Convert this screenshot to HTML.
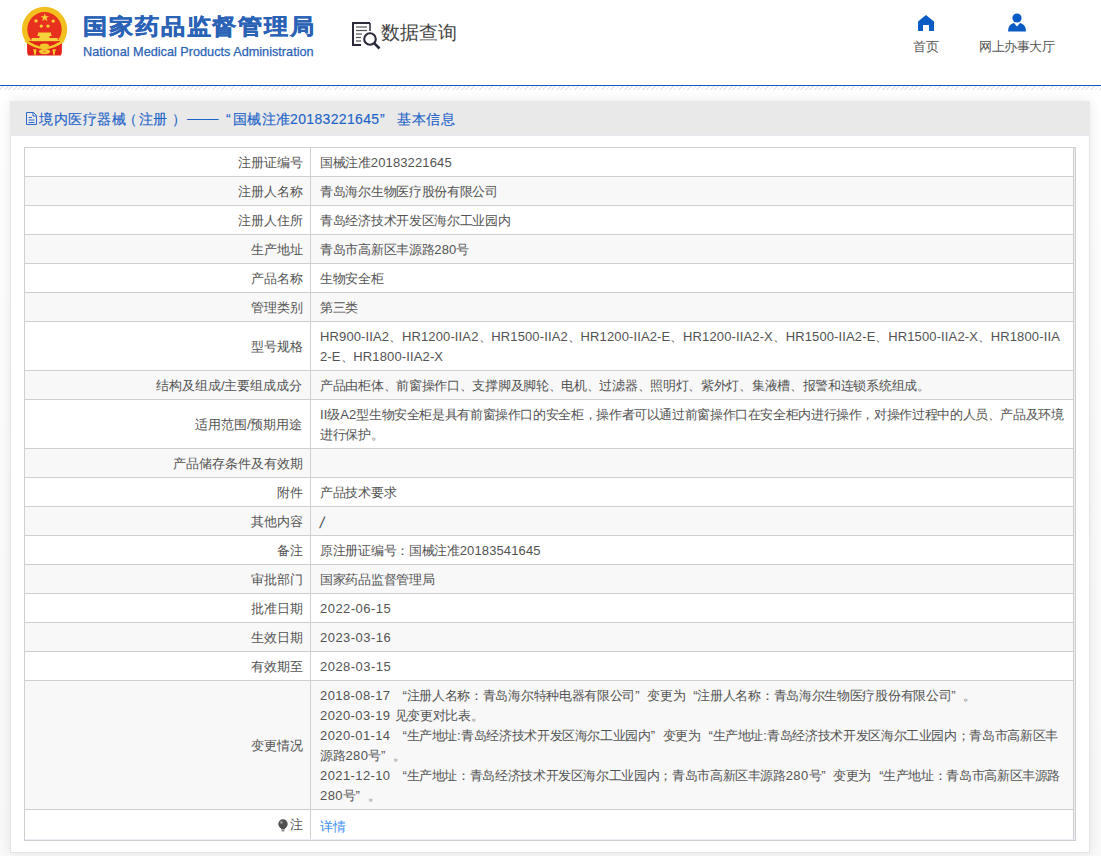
<!DOCTYPE html>
<html><head><meta charset="utf-8">
<style>
html,body{margin:0;padding:0;}
body{width:1101px;height:856px;overflow:hidden;position:relative;background:#fff;font-family:"Liberation Sans",sans-serif;color:#333;}
.abs{position:absolute;}
#bline{position:absolute;left:0;top:85px;width:1101px;height:1px;background:#0a5cc4;}
#hatch{position:absolute;left:0;top:86px;width:1101px;height:4px;
 background:repeating-linear-gradient(135deg,#fff 0px,#fff 2px,#e8e8e8 2px,#e8e8e8 3.2px);}
#bg{position:absolute;left:0;top:90px;width:1101px;height:766px;background:linear-gradient(#fff,#f9f9f9);}
.t1{position:absolute;left:83px;top:13px;font-size:24.7px;letter-spacing:0.9px;font-weight:bold;color:#2a62b6;white-space:nowrap;line-height:30px;transform:scaleY(0.91);transform-origin:0 0;-webkit-text-stroke:0.4px #2a62b6;}
.t2{position:absolute;left:83px;top:45px;font-size:12.7px;color:#2a62b6;white-space:nowrap;line-height:14px;-webkit-text-stroke:0.25px #2a62b6;}
.sq{position:absolute;left:381px;top:19px;font-size:19.2px;color:#444;white-space:nowrap;line-height:28px;}
.nav{position:absolute;font-size:13px;color:#555;white-space:nowrap;line-height:16px;}
#panel{position:absolute;left:10px;top:101px;width:1078px;height:751px;background:#fff;border:1px solid #e4e4e4;border-top:none;
 box-shadow:0 0 12px rgba(0,0,0,0.09);}
#ph{position:absolute;left:10px;top:101px;width:1080px;height:34px;background:#e9e9e9;border-bottom:1px solid #e9ebf3;}
.ptitle{position:absolute;left:39px;top:109px;font-size:14px;color:#1e64c8;white-space:nowrap;line-height:20px;-webkit-text-stroke:0.15px #1e64c8;}
.ptitle .q1{margin-left:9px;} .ptitle .q2{margin-right:9px;}
#tbl{position:absolute;left:24px;top:147px;width:1050px;height:692px;border:1px solid #d1ced0;background:#eceef5;font-size:13px;color:#535353;}
.row{display:flex;width:1049px;border-top:1px solid #d1ced0;background:#fff;}
.row.first{border-top:none;}
.row.g{background:#f8f8f8;}
.l{width:277.5px;padding-right:7.5px;text-align:right;white-space:nowrap;display:flex;align-items:center;justify-content:flex-end;line-height:20px;padding-top:1px;box-sizing:content-box;}
.r{width:753px;padding-left:9px;letter-spacing:-0.3px;border-left:1px solid #d1ced0;border-right:1px solid #d1ced0;white-space:nowrap;line-height:20px;display:flex;flex-direction:column;justify-content:center;padding-top:1px;}
.r .q1{margin-left:8px;} .r .q2{margin-right:8px;} .r .a{letter-spacing:0.13px;}
.bulb{display:inline-block;width:10px;height:13px;margin-right:2px;vertical-align:-2px;}
a{color:#3d8ff0;text-decoration:none;position:relative;top:2px;}
</style></head>
<body>
<!-- emblem -->
<svg class="abs" style="left:15px;top:3px" width="60" height="60" viewBox="0 0 60 60">
 <circle cx="29.6" cy="26.4" r="22.6" fill="#f2c01e"/>
 <circle cx="29.5" cy="26.3" r="17.2" fill="#e8301f"/>
 <path d="M12,38 L47,38 L46.8,49.5 L46,52.6 L13,52.6 L12.2,49.5 Z" fill="#e2231a"/>
 <path d="M10,37.2 Q29.5,52.5 49,37.2" fill="none" stroke="#f3c72a" stroke-width="2.6"/>
 <ellipse cx="29.5" cy="42.6" rx="4.6" ry="2.2" fill="#f3c72a"/>
 <ellipse cx="29.5" cy="48.6" rx="5.6" ry="2.6" fill="#f4cb30"/>
 <ellipse cx="29.5" cy="48.7" rx="1.8" ry="0.9" fill="#ef8a2a"/>
 <polygon points="18.2,46 21.6,46.6 20.6,52.6 19.6,52.6" fill="#f4cb30"/>
 <polygon points="40.8,46 37.4,46.6 38.4,52.6 39.4,52.6" fill="#f4cb30"/>
 <g fill="#f5d23c">
 <polygon points="29.8,10.2 30.85,13.2 34,13.2 31.5,15.1 32.4,18.2 29.8,16.3 27.2,18.2 28.1,15.1 25.6,13.2 28.75,13.2"/>
 <circle cx="21" cy="17.9" r="1.7"/><circle cx="38.2" cy="18.1" r="1.7"/>
 <circle cx="26.3" cy="23.1" r="1.7"/><circle cx="33" cy="23.1" r="1.7"/>
 <rect x="23" y="29.5" width="13" height="2.6"/>
 <rect x="22.3" y="31.8" width="14.4" height="1.2"/>
 <rect x="24.5" y="33" width="10" height="2"/>
 <rect x="16.5" y="35" width="26.2" height="3.2"/>
 </g>
</svg>
<div class="t1">国家药品监督管理局</div>
<div class="t2">National Medical Products Administration</div>
<svg class="abs" style="left:351px;top:21px" width="31" height="30" viewBox="0 0 31 30">
 <path d="M19,2 H2 V24 H10" fill="none" stroke="#2a2a3a" stroke-width="2"/>
 <path d="M19,2 V10" fill="none" stroke="#2a2a3a" stroke-width="1.5"/>
 <line x1="5" y1="6" x2="16" y2="6" stroke="#555" stroke-width="1.2"/>
 <line x1="5" y1="9.5" x2="16" y2="9.5" stroke="#555" stroke-width="1.2"/>
 <line x1="5" y1="13" x2="11" y2="13" stroke="#555" stroke-width="1.2"/>
 <line x1="5" y1="16.5" x2="10" y2="16.5" stroke="#555" stroke-width="1.2"/>
 <line x1="5" y1="20" x2="10" y2="20" stroke="#555" stroke-width="1.2"/>
 <circle cx="19" cy="18" r="5.8" fill="none" stroke="#2a2a3a" stroke-width="2.1"/>
 <line x1="23.2" y1="22.2" x2="28.5" y2="27.5" stroke="#2a2a3a" stroke-width="2.6"/>
</svg>
<div class="sq">数据查询</div>
<svg class="abs" style="left:917px;top:14px" width="18" height="18" viewBox="0 0 18 18">
 <polygon points="1,7.5 9,1 17,7.5 17,17 12,17 12,11 6,11 6,17 1,17" fill="#0a5cc4"/>
</svg>
<div class="nav" style="left:913px;top:39px">首页</div>
<svg class="abs" style="left:1006px;top:12px" width="22" height="21" viewBox="0 0 22 21">
 <circle cx="11" cy="6" r="4.6" fill="#0a5cc4"/>
 <path d="M2,19.6 Q2,12 8,11 L11,14.5 L14,11 Q20,12 20,19.6 Z" fill="#0a5cc4"/>
</svg>
<div class="nav" style="left:979px;top:39px;letter-spacing:-0.4px">网上办事大厅</div>
<div id="bline"></div>
<div id="hatch"></div>
<div id="bg"></div>
<div id="panel"></div>
<div id="ph"></div>
<svg class="abs" style="left:26px;top:112px" width="12" height="13" viewBox="0 0 12 13">
 <path d="M0.5,0.5 H7.5 L10.5,3.5 V12.5 H0.5 Z" fill="none" stroke="#2f68cc" stroke-width="1"/>
 <path d="M7,0.5 V4 H10.5" fill="none" stroke="#2f68cc" stroke-width="1"/>
 <line x1="2.5" y1="5.5" x2="6" y2="5.5" stroke="#2f68cc" stroke-width="1"/>
 <line x1="2.5" y1="8" x2="8.5" y2="8" stroke="#2f68cc" stroke-width="1"/>
 <line x1="2.5" y1="10.5" x2="8.5" y2="10.5" stroke="#2f68cc" stroke-width="1"/>
</svg>
<div class="ptitle" style="left:39px;letter-spacing:0.5px">境内医疗器械</div>
<div class="ptitle" style="left:123px">（</div>
<div class="ptitle" style="left:139px;letter-spacing:0.4px">注册</div>
<div class="ptitle" style="left:172px">）</div>
<div class="ptitle" style="left:187px;top:108px;transform:scaleX(1.12);transform-origin:0 0">——</div>
<div class="ptitle" style="left:226px">“</div>
<div class="ptitle" style="left:233px;letter-spacing:0.4px">国械注准</div>
<div class="ptitle" style="left:290px;letter-spacing:0.35px">20183221645</div>
<div class="ptitle" style="left:380px">”</div>
<div class="ptitle" style="left:397px;letter-spacing:0.5px">基本信息</div>
<div id="tbl">
<div class="row first" style="height:28px"><div class="l">注册证编号</div><div class="r"><div><div>国械注准<span class=a>20183221645</span></div></div></div></div>
<div class="row g" style="height:28px"><div class="l">注册人名称</div><div class="r"><div><div>青岛海尔生物医疗股份有限公司</div></div></div></div>
<div class="row" style="height:28px"><div class="l">注册人住所</div><div class="r"><div><div>青岛经济技术开发区海尔工业园内</div></div></div></div>
<div class="row g" style="height:28px"><div class="l">生产地址</div><div class="r"><div><div>青岛市高新区丰源路<span class=a>280</span>号</div></div></div></div>
<div class="row" style="height:28px"><div class="l">产品名称</div><div class="r"><div><div>生物安全柜</div></div></div></div>
<div class="row g" style="height:28px"><div class="l">管理类别</div><div class="r"><div><div>第三类</div></div></div></div>
<div class="row" style="height:48px"><div class="l">型号规格</div><div class="r"><div><div><span class=a>HR900-IIA2</span>、<span class=a>HR1200-IIA2</span>、<span class=a>HR1500-IIA2</span>、<span class=a>HR1200-IIA2-E</span>、<span class=a>HR1200-IIA2-X</span>、<span class=a>HR1500-IIA2-E</span>、<span class=a>HR1500-IIA2-X</span>、<span class=a>HR1800-IIA</span></div><div><span class=a>2-E</span>、<span class=a>HR1800-IIA2-X</span></div></div></div></div>
<div class="row g" style="height:28px"><div class="l">结构及组成/主要组成成分</div><div class="r"><div><div>产品由柜体、前窗操作口、支撑脚及脚轮、电机、过滤器、照明灯、紫外灯、集液槽、报警和连锁系统组成。</div></div></div></div>
<div class="row" style="height:48px"><div class="l">适用范围/预期用途</div><div class="r"><div><div style="letter-spacing:-0.37px"><span class=a>II</span>级<span class=a>A2</span>型生物安全柜是具有前窗操作口的安全柜，操作者可以通过前窗操作口在安全柜内进行操作，对操作过程中的人员、产品及环境</div><div>进行保护。</div></div></div></div>
<div class="row g" style="height:28px"><div class="l">产品储存条件及有效期</div><div class="r"><div><div></div></div></div></div>
<div class="row" style="height:28px"><div class="l">附件</div><div class="r"><div><div>产品技术要求</div></div></div></div>
<div class="row g" style="height:28px"><div class="l">其他内容</div><div class="r"><div><div><span style="font-size:16px;line-height:20px;position:relative;top:2px;display:inline-block;transform:skewX(-10deg)">/</span></div></div></div></div>
<div class="row" style="height:28px"><div class="l">备注</div><div class="r"><div><div>原注册证编号：国械注准<span class=a>20183541645</span></div></div></div></div>
<div class="row g" style="height:28px"><div class="l">审批部门</div><div class="r"><div><div>国家药品监督管理局</div></div></div></div>
<div class="row" style="height:28px"><div class="l">批准日期</div><div class="r"><div><div><span class=a style="letter-spacing:0.46px">2022-06-15</span></div></div></div></div>
<div class="row g" style="height:28px"><div class="l">生效日期</div><div class="r"><div><div><span class=a style="letter-spacing:0.46px">2023-03-16</span></div></div></div></div>
<div class="row" style="height:28px"><div class="l">有效期至</div><div class="r"><div><div><span class=a style="letter-spacing:0.46px">2028-03-15</span></div></div></div></div>
<div class="row g" style="height:128px"><div class="l">变更情况</div><div class="r"><div><div><span class=a style="letter-spacing:0.4px">2018-08-17 </span><span class=q1>“</span>注册人名称：青岛海尔特种电器有限公司<span class=q2>”</span>变更为<span class=q1>“</span>注册人名称：青岛海尔生物医疗股份有限公司<span class=q2>”</span>。</div><div><span class=a style="letter-spacing:0.4px">2020-03-19 </span>见变更对比表。</div><div style="letter-spacing:-0.36px"><span class=a style="letter-spacing:0.4px">2020-01-14 </span><span class=q1>“</span>生产地址<span class=a style="letter-spacing:0.4px">:</span>青岛经济技术开发区海尔工业园内<span class=q2>”</span>变更为<span class=q1>“</span>生产地址<span class=a style="letter-spacing:0.4px">:</span>青岛经济技术开发区海尔工业园内；青岛市高新区丰</div><div>源路<span class=a style="letter-spacing:0.4px">280</span>号<span class=q2>”</span>。</div><div style="letter-spacing:-0.36px"><span class=a style="letter-spacing:0.4px">2021-12-10 </span><span class=q1>“</span>生产地址：青岛经济技术开发区海尔工业园内；青岛市高新区丰源路<span class=a style="letter-spacing:0.4px">280</span>号<span class=q2>”</span>变更为<span class=q1>“</span>生产地址：青岛市高新区丰源路</div><div><span class=a style="letter-spacing:0.4px">280</span>号<span class=q2>”</span>。</div></div></div></div>
<div class="row" style="height:29px"><div class="l"><svg class=bulb viewBox="0 0 10 13"><circle cx="5" cy="5" r="4.7" fill="#505050"/><path d="M2.6,8.5 L7.4,8.5 L6.6,10.6 L3.4,10.6 Z" fill="#505050"/><rect x="3.6" y="11.2" width="2.8" height="1.2" fill="#707070"/><circle cx="3.4" cy="3.4" r="1.3" fill="#9a9a9a"/></svg>注</div><div class="r"><div><div><a>详情</a></div></div></div></div></div></body></html>
